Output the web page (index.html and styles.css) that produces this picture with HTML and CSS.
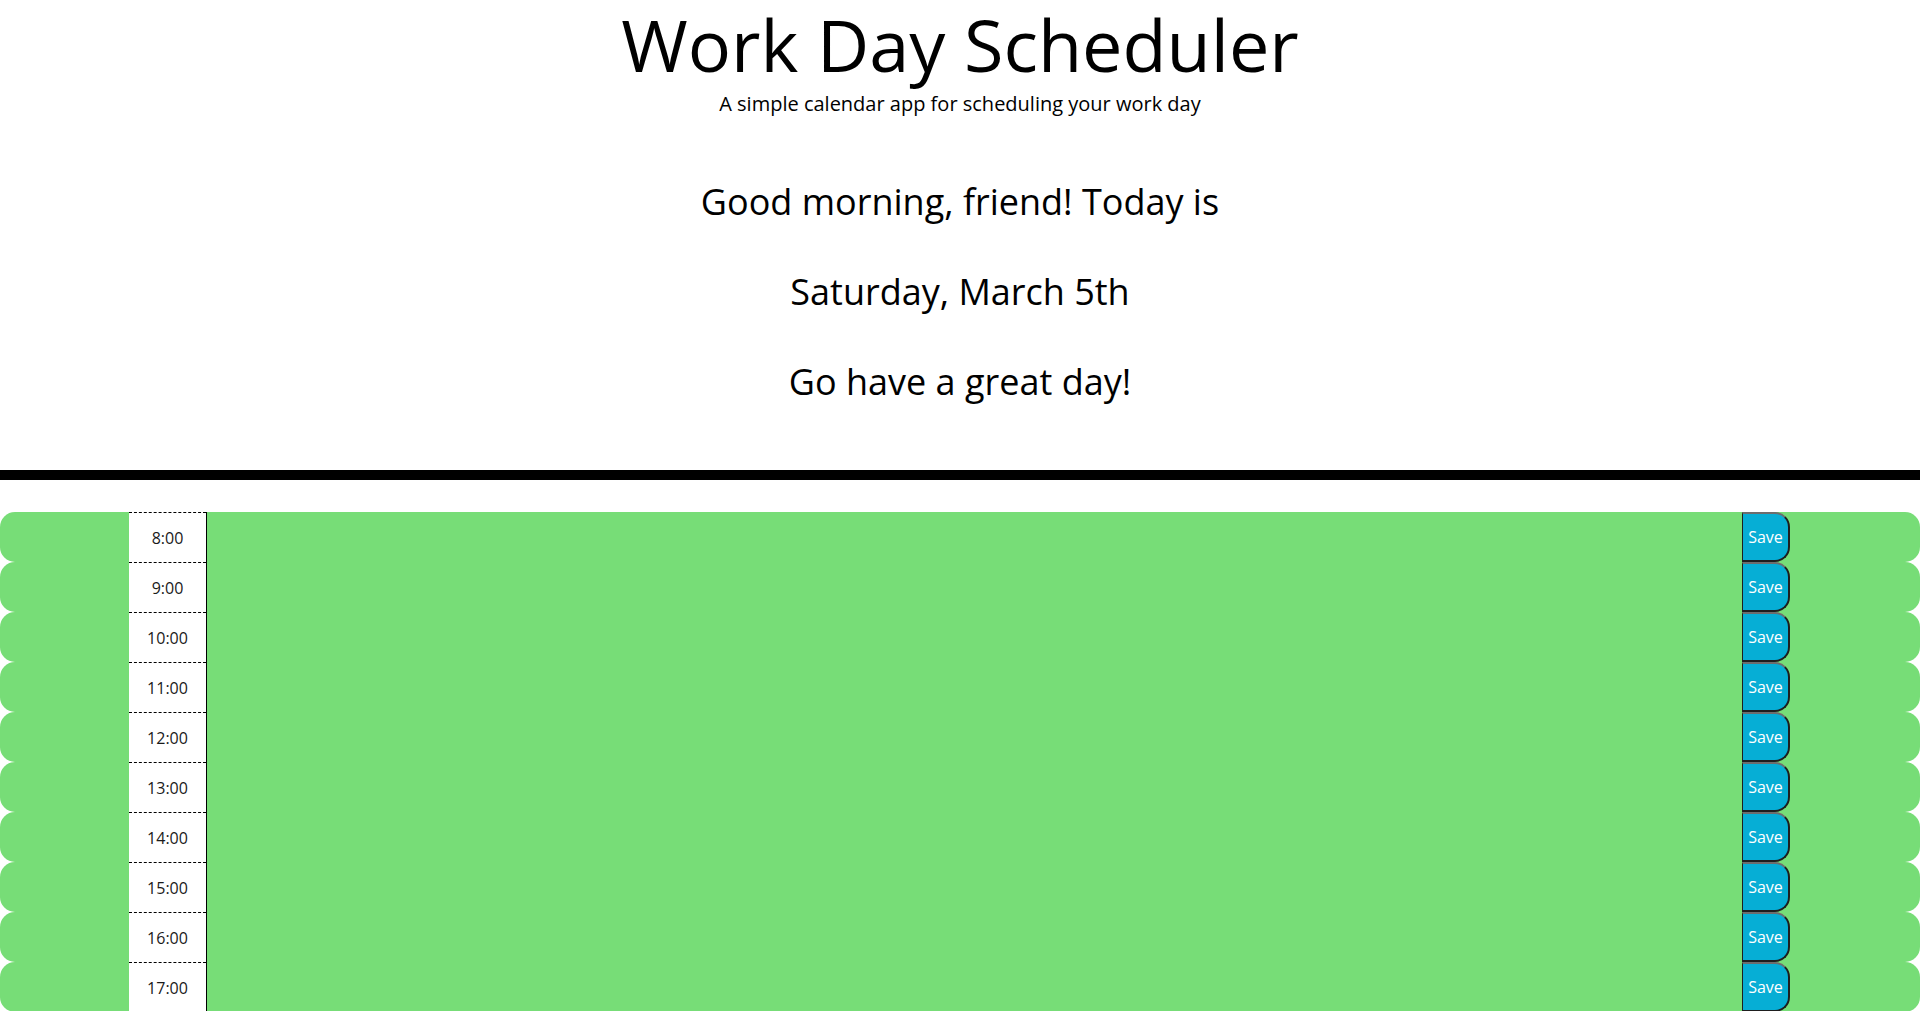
FILE: index.html
```html
<!DOCTYPE html>
<html lang="en">
<head>
<meta charset="UTF-8">
<title>Work Day Scheduler</title>
<link rel="stylesheet" href="styles.css">
</head>
<body>
<header class="jumbotron">
  <h1 class="title">Work Day Scheduler</h1>
  <p class="lead">A simple calendar app for scheduling your work day</p>
  <div class="greeting">
    <p class="greet-line">Good morning, friend! Today is</p>
    <p class="greet-line">Saturday, March 5th</p>
    <p class="greet-line">Go have a great day!</p>
  </div>
</header>
<main class="schedule">
  <div class="row future"><div class="hour">8:00</div><textarea class="description"></textarea><button class="saveBtn">Save</button></div>
  <div class="row future"><div class="hour">9:00</div><textarea class="description"></textarea><button class="saveBtn">Save</button></div>
  <div class="row future"><div class="hour">10:00</div><textarea class="description"></textarea><button class="saveBtn">Save</button></div>
  <div class="row future"><div class="hour">11:00</div><textarea class="description"></textarea><button class="saveBtn">Save</button></div>
  <div class="row future"><div class="hour">12:00</div><textarea class="description"></textarea><button class="saveBtn">Save</button></div>
  <div class="row future"><div class="hour">13:00</div><textarea class="description"></textarea><button class="saveBtn">Save</button></div>
  <div class="row future"><div class="hour">14:00</div><textarea class="description"></textarea><button class="saveBtn">Save</button></div>
  <div class="row future"><div class="hour">15:00</div><textarea class="description"></textarea><button class="saveBtn">Save</button></div>
  <div class="row future"><div class="hour">16:00</div><textarea class="description"></textarea><button class="saveBtn">Save</button></div>
  <div class="row future"><div class="hour">17:00</div><textarea class="description"></textarea><button class="saveBtn">Save</button></div>
</main>
</body>
</html>
```
FILE: styles.css
```css
html, body {
  margin: 0;
  padding: 0;
  background: #ffffff;
}
body {
  font-family: "Open Sans", "Liberation Sans", sans-serif;
  font-size: 16px;
  line-height: 1;
  color: #000000;
}
.jumbotron {
  text-align: center;
  padding: 0 0 70px;
  border-bottom: 10px solid #000000;
}
.title {
  margin: 0;
  font-size: 72px;
  font-weight: 400;
  line-height: 88px;
}
.lead {
  margin: 6px 0 0;
  font-size: 20px;
  font-weight: 400;
  line-height: 20px;
}
.greeting {
  margin-top: 70px;
  display: flex;
  flex-direction: column;
  gap: 54px;
}
.greet-line {
  margin: 0;
  font-size: 36px;
  line-height: 36px;
}
.schedule {
  margin-top: 32px;
}
.row {
  display: flex;
  height: 50px;
  padding: 0 130px 0 129px;
  border-radius: 15px;
}
.future {
  background-color: #77dd77;
}
.hour {
  width: 77px;
  box-sizing: border-box;
  background: #ffffff;
  border-top: 1px dashed #000000;
  display: flex;
  align-items: center;
  justify-content: center;
  font-size: 16px;
  color: #1a1a1a;
}
.description {
  flex: 1;
  background: transparent;
  border: none;
  border-left: 1px solid #000000;
  resize: none;
  padding: 10px;
  margin: 0;
  font-family: inherit;
}
.saveBtn {
  width: 48px;
  height: 50px;
  box-sizing: border-box;
  margin: 0;
  padding: 0;
  background-color: #06aed5;
  color: #ffffff;
  font-family: "Open Sans", sans-serif;
  font-size: 16px;
  border-top: 2px solid #6d6d6d;
  border-right: 2px solid #1e1e1e;
  border-bottom: 2px solid #1e1e1e;
  border-left: 1px solid #1e1e1e;
  border-radius: 0 15px 15px 0;
}
```
